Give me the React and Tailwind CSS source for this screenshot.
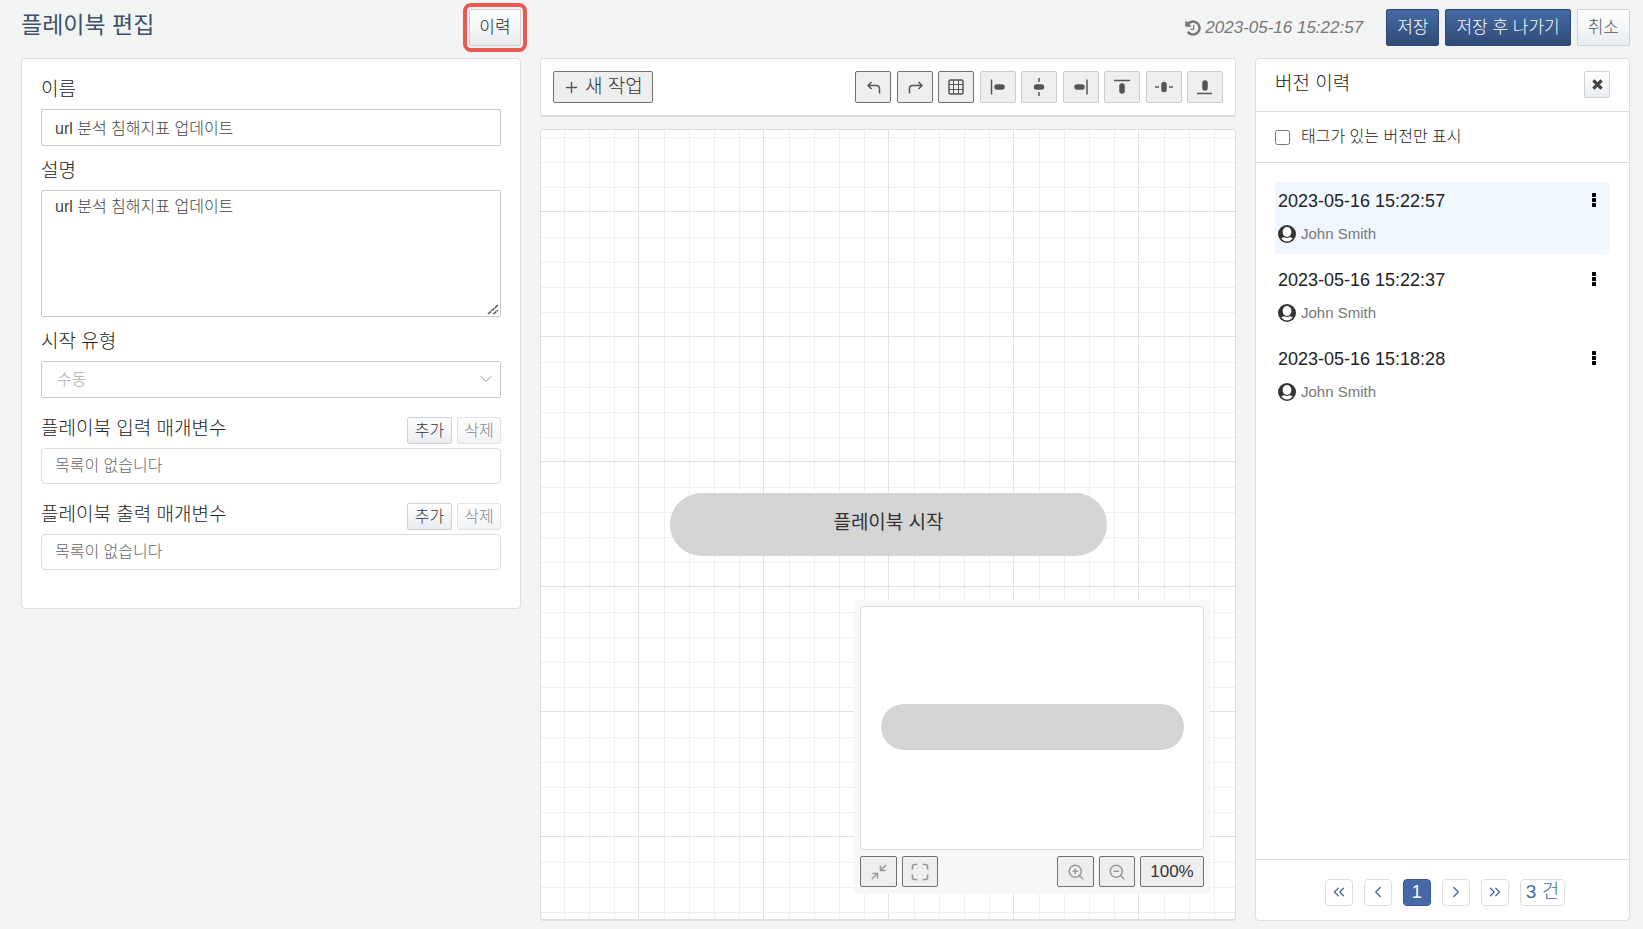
import React, { useState } from 'react';
import { Plus, ChevronDown, Maximize, Minimize2, ZoomIn, ZoomOut, ChevronLeft, ChevronRight, ChevronsLeft, ChevronsRight } from 'lucide-react';

const versions = [
  { id: 1, date: '2023-05-16 15:22:57', user: 'John Smith' },
  { id: 2, date: '2023-05-16 15:22:37', user: 'John Smith' },
  { id: 3, date: '2023-05-16 15:18:28', user: 'John Smith' },
];

const tools = [
  { id: 'undo', label: '실행 취소', enabled: true },
  { id: 'redo', label: '다시 실행', enabled: true },
  { id: 'grid', label: '격자', enabled: true },
  { id: 'left', label: '왼쪽 맞춤' },
  { id: 'center', label: '가운데 맞춤' },
  { id: 'right', label: '오른쪽 맞춤' },
  { id: 'top', label: '위쪽 맞춤' },
  { id: 'middle', label: '중간 맞춤' },
  { id: 'bottom', label: '아래쪽 맞춤' },
];

const shapes = {
  undo: <path d="M7.5 4 4 7.500 7.500 11M4 7.500h8.500a3 3 0 0 1 3 3v5" />,
  redo: <path d="M12.500 4 16 7.500 12.500 11M16 7.500H6.500a3 3 0 0 0-3 3v5" />,
  grid: (
    <>
      <rect x="2" y="2" width="14" height="14" rx="1.5" />
      <path strokeWidth="1" d="M6.5 2v14M11.5 2v14M2 6.5h14M2 11.5h14" />
    </>
  ),
  left: <><path d="M2.5 1.5v15" /><rect x="6" y="7" width="9" height="4" rx="2" fill="currentColor" /></>,
  center: <><path d="M9 0v4M9 14v4" /><rect x="4.5" y="7" width="9" height="4" rx="2" fill="currentColor" /></>,
  right: <><path d="M15 1.5v15" /><rect x="3" y="7" width="9" height="4" rx="2" fill="currentColor" /></>,
  top: <><path d="M1 2.5h16" /><rect x="7" y="6" width="4" height="9" rx="2" fill="currentColor" /></>,
  middle: <><path d="M0 9h4M14 9h4" /><rect x="7" y="4.5" width="4" height="9" rx="2" fill="currentColor" /></>,
  bottom: <><path d="M1 15.5h15" /><rect x="7" y="3" width="4" height="9" rx="2" fill="currentColor" /></>,
};

const panel = 'bg-white border border-[#dcdede] rounded';
const lightButton = 'border border-[#cfd2d4] rounded-xs bg-linear-to-b from-white to-[#e9ecf0]';
const navyButton = 'h-[37px] px-[10px] text-[17px] text-white border border-[#2d4a76] rounded-xs bg-linear-to-b from-[#466aa5] to-[#304c78]';
const toolButton = 'flex items-center justify-center rounded-xs border bg-[#eeeeee]';
const pageButton = 'flex items-center justify-center h-[27px] w-7 rounded border border-[#dddddd] text-[#466aa5]';

function HistoryIcon() {
  return (
    <svg width="16" height="18" viewBox="0 0 1536 1792" fill="currentColor">
      <path d="M1536 896q0 156-61 298t-164 245-245 164-298 61q-172 0-327-72.5t-264-204.5q-7-10-6.5-22.5t8.5-20.5l137-138q10-9 25-9 16 2 23 12 73 95 179 147t225 52q104 0 198.5-40.5t163.5-109.5 109.5-163.5 40.5-198.5-40.5-198.5-109.5-163.5-163.5-109.5-198.5-40.5q-98 0-188 35.5t-160 101.5l137 138q31 30 14 69-17 40-59 40h-448q-26 0-45-19t-19-45v-448q0-42 40-59 39-17 69 14l130 129q107-101 244.5-156.5t284.5-55.5q156 0 298 61t245 164 164 245 61 298zm-640-288v448q0 14-9 23t-23 9h-320q-14 0-23-9t-9-23v-64q0-14 9-23t23-9h224v-352q0-14 9-23t23-9h64q14 0 23 9t9 23z" />
    </svg>
  );
}

function UserIcon() {
  return (
    <svg width="18" height="18" viewBox="0 0 18 18">
      <circle cx="9" cy="9" r="9" fill="#333333" />
      <ellipse cx="9" cy="7" rx="4.4" ry="5" fill="#ffffff" />
      <path d="M3.2 13.6C4.5 12.4 5.6 12.2 6.5 12.2c1.5 1.1 3.5 1.1 5 0 .9 0 2 .2 3.3 1.4A7.4 7.4 0 0 1 3.2 13.6z" fill="#ffffff" />
    </svg>
  );
}

function ParamList({ title }) {
  return (
    <div className="mt-[18px]">
      <div className="flex items-start justify-between h-[32px]">
        <h2 className="text-[19px] leading-[26px]">{title}</h2>
        <div className="flex gap-[5px] pt-[1px]">
          <button className={`${lightButton} h-[27px] w-[45px] leading-[20px] text-[#333333]`}>추가</button>
          <button disabled className={`${lightButton} h-[27px] w-[44px] leading-[20px] text-[#333333] opacity-60`}>삭제</button>
        </div>
      </div>
      <div className="h-[36px] px-[13px] leading-[34px] border border-[#dcdcdc] rounded text-[#666666]">
        목록이 없습니다
      </div>
    </div>
  );
}

function EditForm() {
  const [name, setName] = useState('url 분석 침해지표 업데이트');
  const [desc, setDesc] = useState('url 분석 침해지표 업데이트');
  const field = 'block w-full px-[13px] border border-[#c8c8c8] rounded-xs bg-white';

  return (
    <section className={`${panel} w-[500px] shrink-0 px-[19px] pt-[17px] pb-[38px]`}>
      <label htmlFor="name" className="block text-[19px] leading-[27px] mb-[6px]">이름</label>
      <input id="name" value={name} onChange={(e) => setName(e.target.value)} className={`${field} h-[37px] pb-[2px] text-[#444444]`} />
      <label htmlFor="desc" className="block text-[19px] leading-[27px] mt-[11px] mb-[6px]">설명</label>
      <div className="relative">
        <textarea id="desc" value={desc} onChange={(e) => setDesc(e.target.value)} className={`${field} h-[127px] py-[4px] resize text-[#444444]`} />
        <svg width="14" height="14" viewBox="0 0 14 14" className="absolute right-[1px] bottom-[1px] pointer-events-none" fill="none">
          <rect width="14" height="14" fill="#ffffff" />
          <path d="M2 12 12 3M7.5 12 12 8" stroke="#555555" strokeWidth="1.5" strokeDasharray="4 .6" />
        </svg>
      </div>
      <label htmlFor="type" className="block text-[19px] leading-[27px] mt-[11px] mb-[6px]">시작 유형</label>
      <div className="relative">
        <select id="type" disabled className={`${field} h-[37px] appearance-none pl-[15px] text-[#aaaaaa]`}>
          <option>수동</option>
        </select>
        <ChevronDown size={20} strokeWidth={1.2} className="absolute right-[5px] top-[8px] text-[#999999] pointer-events-none" />
      </div>
      <ParamList title="플레이북 입력 매개변수" />
      <ParamList title="플레이북 출력 매개변수" />
    </section>
  );
}

function Toolbar() {
  return (
    <div className={`${panel} border-b-2 h-[59px] px-[12px] pt-[12px] flex items-start justify-between shrink-0`}>
      <button className={`${toolButton} h-8 px-[9px] gap-[5px] border-[#707070] text-[#555555]`}>
        <Plus size={17} strokeWidth={2} />
        <span className="text-[19px] leading-[24px] text-[#333333]">새 작업</span>
      </button>
      <div className="flex justify-between w-[368px]">
        {tools.map((tool) => (
          <button
            key={tool.id}
            aria-label={tool.label}
            className={`${toolButton} h-8 w-9 text-[#555555] ${tool.enabled ? 'border-[#707070]' : 'border-[#cccccc]'}`}
          >
            <svg width="18" height="18" viewBox="0 0 18 18" fill="none" stroke="currentColor" strokeWidth="1.5" strokeLinejoin="round">
              {shapes[tool.id]}
            </svg>
          </button>
        ))}
      </div>
    </div>
  );
}

function MiniMap() {
  const button = `${toolButton} h-[31px] border-[#707070] text-[#999999]`;
  return (
    <div className="absolute right-[25px] bottom-[25px] w-[356px] p-[6px] pb-[7px] rounded bg-[#f7f7f7]">
      <div className="h-[244px] flex items-center justify-center pb-[2px] border border-[#dcdcdc] rounded bg-white">
        <div className="w-[303px] h-[46px] rounded-full bg-[#d4d4d4]" />
      </div>
      <div className="flex items-center gap-[5px] mt-[6px]">
        <button aria-label="축소" className={`${button} w-[37px]`}><Minimize2 size={18} strokeWidth={2} /></button>
        <button aria-label="화면 맞춤" className={`${button} w-9`}><Maximize size={20} strokeWidth={2} /></button>
        <button aria-label="확대" className={`${button} w-[37px] ml-auto`}><ZoomIn size={18} strokeWidth={2} /></button>
        <button aria-label="축소 보기" className={`${button} w-9`}><ZoomOut size={18} strokeWidth={2} /></button>
        <button className={`${button} w-16 text-[17px]`}>
          <span className="text-[#333333]">100%</span>
        </button>
      </div>
    </div>
  );
}

function Canvas() {
  return (
    <div className={`${panel} border-b-2 relative flex-1 overflow-hidden`}>
      <svg className="absolute inset-0 w-full h-full">
        <defs>
          <pattern id="grid" x="97" y="81" width="125" height="125" patternUnits="userSpaceOnUse">
            <path d="M26.5 0v125M51.5 0v125M76.5 0v125M101.5 0v125M0 26.5h125M0 51.5h125M0 76.5h125M0 101.5h125" stroke="#f0f0f0" />
            <path d="M.5 0v125M0 .5h125" stroke="#e2e2e2" />
          </pattern>
        </defs>
        <rect width="100%" height="100%" fill="url(#grid)" />
      </svg>
      <div className="absolute left-[129px] top-[363px] w-[437px] h-[63px] pb-[2px] flex items-center justify-center rounded-full bg-[#d4d4d4] text-[19px] font-normal text-[#333333]">
        플레이북 시작
      </div>
      <MiniMap />
    </div>
  );
}

function VersionItem({ version, selected }) {
  return (
    <li className={`h-[72px] px-[3px] pt-[6px] ${selected ? 'bg-[#f0f7ff]' : ''}`}>
      <div className="flex items-center justify-between h-[26px] pr-[8px]">
        <span className="text-[18px]">{version.date}</span>
        <button aria-label="메뉴" className="pb-[2px] text-black">
          <svg width="10" height="16" viewBox="0 0 10 16" fill="currentColor">
            <rect x="3" y="1" width="4" height="4" rx=".5" />
            <rect x="3" y="6" width="4" height="4" rx=".5" />
            <rect x="3" y="11" width="4" height="4" rx=".5" />
          </svg>
        </button>
      </div>
      <div className="flex items-center gap-[5px] mt-[9px] h-[22px]">
        <UserIcon />
        <span className="text-[15px] text-[#777777]">{version.user}</span>
      </div>
    </li>
  );
}

function VersionHistory() {
  const [taggedOnly, setTaggedOnly] = useState(false);

  return (
    <aside className={`${panel} w-[375px] shrink-0 flex flex-col`}>
      <div className="h-[53px] shrink-0 px-[19px] pt-[12px] flex justify-between border-b border-[#dcdede]">
        <h2 className="text-[19px] leading-[26px]">버전 이력</h2>
        <button aria-label="닫기" className={`${lightButton} flex items-center justify-center h-[27px] w-[26px] text-[#444444]`}>
          <svg width="11" height="11" viewBox="0 0 12 12" stroke="currentColor" strokeWidth="3.6">
            <path d="M1.5 1.5l9 9M10.5 1.5l-9 9" />
          </svg>
        </button>
      </div>
      <label className="h-[51px] shrink-0 px-[19px] flex items-center gap-[11px] border-b border-[#dcdede]">
        <input
          type="checkbox"
          checked={taggedOnly}
          onChange={(e) => setTaggedOnly(e.target.checked)}
          className="w-[15px] h-[15px]"
        />
        태그가 있는 버전만 표시
      </label>
      <ul className="flex-1 px-[19px] py-[19px] space-y-[7px]">
        {versions.map((version, i) => (
          <VersionItem key={version.id} version={version} selected={i === 0} />
        ))}
      </ul>
      <nav className="h-[61px] shrink-0 flex items-center justify-center gap-[11px] pl-[5px] pt-[4px] border-t border-[#dcdede]">
        <button aria-label="처음" className={pageButton}><ChevronsLeft size={18} strokeWidth={1.8} /></button>
        <button aria-label="이전" className={pageButton}><ChevronLeft size={18} strokeWidth={1.8} /></button>
        <button className="h-[27px] w-7 rounded text-[18px] leading-[25px] text-white bg-[#466aa5] border border-[#3a5a8f]">1</button>
        <button aria-label="다음" className={pageButton}><ChevronRight size={18} strokeWidth={1.8} /></button>
        <button aria-label="마지막" className={pageButton}><ChevronsRight size={18} strokeWidth={1.8} /></button>
        <span className="h-[27px] px-[5px] rounded border border-[#dddddd] text-[19px] leading-[23px] text-[#466aa5]">3 건</span>
      </nav>
    </aside>
  );
}

export default function App() {
  return (
    <div className="h-screen flex flex-col pl-[21px] pr-[13px] pb-[8px] bg-[#f2f4f4] text-[16px] font-light text-[#222222] font-['Liberation_Sans','Noto_Sans_CJK_KR',sans-serif]">
      <header className="h-[58px] shrink-0 flex items-start justify-between pt-[9px]">
        <div className="w-[500px] flex items-start justify-between">
          <h1 className="pt-[1px] text-[23px] leading-[30px] font-normal text-[#3d5066]">플레이북 편집</h1>
          <button className={`${lightButton} h-[37px] w-[52px] text-[17px] outline-4 outline-offset-2 outline-[#e65a50]`}>이력</button>
        </div>
        <div className="flex items-center gap-[6px]">
          <div className="flex items-center gap-[4px] mr-[17px] text-[#777777]">
            <HistoryIcon />
            <em className="text-[17px]">2023-05-16 15:22:57</em>
          </div>
          <button className={navyButton}>저장</button>
          <button className={navyButton}>저장 후 나가기</button>
          <button className={`${lightButton} h-[37px] px-[10px] text-[17px] text-[#555555]`}>취소</button>
        </div>
      </header>
      <main className="flex-1 min-h-0 flex items-stretch gap-[19px]">
        <div className="shrink-0">
          <EditForm />
        </div>
        <section className="flex-1 min-w-0 flex flex-col gap-[12px]">
          <Toolbar />
          <Canvas />
        </section>
        <VersionHistory />
      </main>
    </div>
  );
}
